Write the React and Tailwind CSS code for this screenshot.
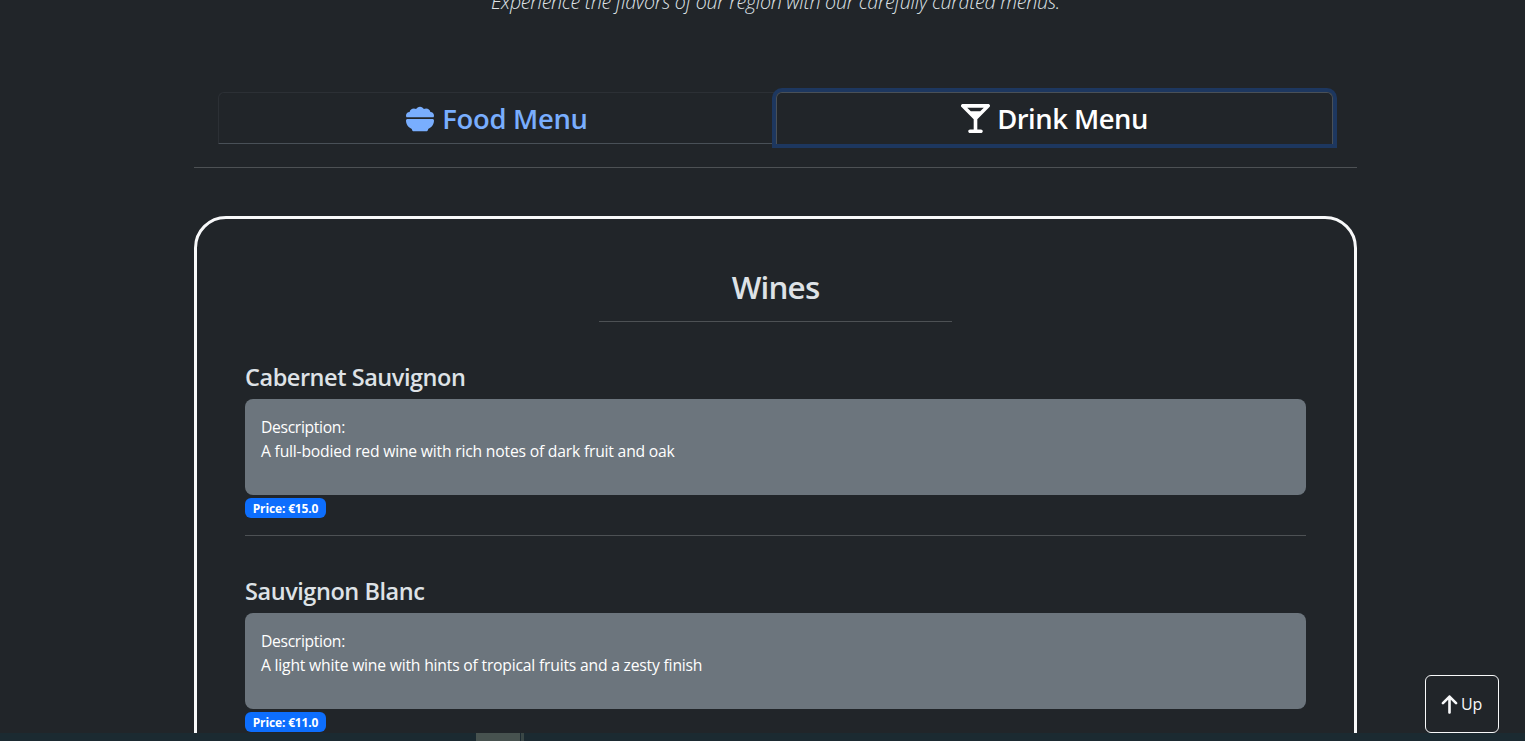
import { FaBowlFood, FaMartiniGlass, FaArrowUp } from "react-icons/fa6";

const wines = [
  {
    name: "Cabernet Sauvignon",
    description: "A full-bodied red wine with rich notes of dark fruit and oak",
    price: "15.0",
  },
  {
    name: "Sauvignon Blanc",
    description: "A light white wine with hints of tropical fruits and a zesty finish",
    price: "11.0",
  },
];

function Tabs() {
  return (
    <nav className="mx-6 flex h-[52px] shrink-0 text-[27.4px] font-semibold">
      <button className="flex flex-1 items-center justify-center gap-2 rounded-tl-md border border-r-0 border-[#2c3035] border-b-[#495057] pt-[2px] pr-px text-[#79aefe]">
        <FaBowlFood className="size-7" />
        <span className="tracking-[-0.3px]">Food Menu</span>
      </button>
      <button className="flex w-[557px] items-center justify-center gap-[7px] rounded-t-md border border-b-0 border-[#495057] text-white shadow-[0_0_0_4px_#1d375f]">
        <FaMartiniGlass className="size-[29px]" />
        <span className="tracking-[-0.5px]">Drink Menu</span>
      </button>
    </nav>
  );
}

function MenuItem({ item }) {
  return (
    <article className="h-[214px]">
      <h3 className="h-[37px] pt-px text-[23.5px] leading-[29px] font-semibold tracking-[-0.45px]">{item.name}</h3>
      <div className="h-24 rounded-lg bg-[#6c757d] p-4 text-[15.7px] leading-6 tracking-[-0.2px] text-white">
        <p><span className="tracking-[-0.33px]">Description:</span></p>
        <p><span>{item.description}</span></p>
      </div>
      <div className="mt-[3px] flex h-5 w-[81px] items-center justify-center rounded-md bg-[#0d6efd] pt-px text-[12px] leading-3 font-bold tracking-[-0.15px] text-white">
        <span>Price: €{item.price}</span>
      </div>
      <hr className="mt-[17px] border-[#4d5154]" />
    </article>
  );
}

export default function App() {
  return (
    <div className="relative flex h-[741px] w-full flex-col overflow-hidden bg-[#212529] font-['Open_Sans','Noto_Sans',sans-serif] text-[#dee2e6]">
      <main className="ml-[194px] flex min-h-0 w-[1163px] flex-1 flex-col overflow-hidden">
        <p className="-mt-[13px] h-[105px] shrink-0 text-center text-[19.6px] leading-[30px] font-light tracking-[-0.26px] italic">
          <span>Experience the flavors of our region with our carefully curated menus.</span>
        </p>
        <Tabs />
        <hr className="mt-[23px] shrink-0 border-[#4d5154]" />
        <section className="mt-12 h-[900px] shrink-0 rounded-t-[32px] border-[3px] border-[#f8f9fa] px-12 pt-[49px]">
          <h2 className="text-center text-[31.4px] leading-[38px] font-semibold tracking-[-0.8px]">
            <span>Wines</span>
          </h2>
          <hr className="mx-auto mt-[15px] w-[353px] border-[#4d5154]" />
          <div className="mt-10">
            {wines.map((item) => (
              <MenuItem key={item.name} item={item} />
            ))}
          </div>
        </section>
      </main>
      <footer className="flex h-2 shrink-0 bg-[#1b2a31] pl-[476px]">
        <div className="w-11 bg-[#47524f]" />
        <div className="ml-px w-[3px] bg-[#3a4746]" />
      </footer>
      <button className="absolute right-[26px] bottom-2 flex h-[58px] w-[74px] items-center justify-center gap-[3px] rounded-md border border-[#f8f9fa] bg-[#212529] pr-px text-[16px] font-medium text-[#f8f9fa]">
        <FaArrowUp className="h-[21px] w-[17px]" />
        <span className="tracking-[-0.3px]">Up</span>
      </button>
    </div>
  );
}
